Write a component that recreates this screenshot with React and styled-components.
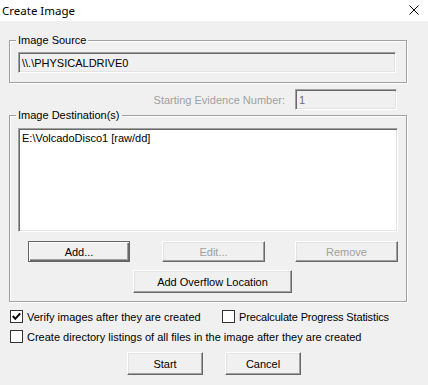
import React from "react";
import styled, { createGlobalStyle, css } from "styled-components";

const Global = createGlobalStyle`
  html, body { margin: 0; padding: 0; background: #f0f0f0; }
  body { width: 428px; height: 385px; overflow: hidden; }
  * { box-sizing: border-box; }
`;

const Window = styled.div`
  width: 428px;
  height: 385px;
  background: #f0f0f0;
  font-family: "Liberation Sans", Arial, sans-serif;
  font-size: 11px;
  color: #000;
  display: flex;
  flex-direction: column;
`;

const TitleBar = styled.div`
  height: 21px;
  background: #fff;
  display: flex;
  align-items: center;
  justify-content: space-between;
  padding: 0 9px 1px 2px;
`;

const Title = styled.span`
  font-family: "Noto Sans", "Open Sans", sans-serif;
  font-size: 11.5px;
  color: #000;
`;

const Body = styled.div`
  display: flex;
  flex-direction: column;
  padding-left: 9px;
  width: 407px;
`;

const Group = styled.div`
  position: relative;
  border: 1px solid #a0a0a0;
  box-shadow: inset 1px 1px 0 #fff, 1px 1px 0 #fff;
  margin-top: ${(p) => p.$mt}px;
  height: ${(p) => p.$h}px;
  padding: ${(p) => p.$pt}px 0 0 8px;
  display: flex;
  flex-direction: column;
`;

const Legend = styled.span`
  position: absolute;
  top: -7px;
  left: 6px;
  padding: 0 2px;
  background: #f0f0f0;
  line-height: 13px;
`;

const sunken = css`
  border-style: solid;
  border-width: 1px;
  border-color: #a0a0a0 #fff #fff #a0a0a0;
  box-shadow: inset 1px 1px 0 #696969, inset -1px -1px 0 #e3e3e3;
`;

const Field = styled.div`
  ${sunken}
  width: ${(p) => p.$w}px;
  height: 21px;
  background: #f0f0f0;
  padding: 3px 3px 0 3px;
  line-height: 14px;
  color: ${(p) => (p.$disabled ? "#6d6d6d" : "#000")};
  white-space: nowrap;
`;

const EvidenceRow = styled.div`
  display: flex;
  justify-content: flex-end;
  align-items: center;
  gap: 10px;
  margin-top: 6px;
  padding-right: 10px;
  height: 21px;
`;

const Muted = styled.span`
  color: #a0a0a0;
`;

const ListBox = styled.div`
  ${sunken}
  width: 380px;
  height: 104px;
  background: #fff;
  padding: 3px 3px;
  line-height: 13px;
`;

const ButtonRow = styled.div`
  display: flex;
  margin-top: ${(p) => p.$mt}px;
  padding-left: ${(p) => p.$pl}px;
  gap: ${(p) => p.$gap || 0}px;
`;

const Button = styled.div`
  width: ${(p) => p.$w}px;
  height: ${(p) => p.$h || 23}px;
  margin-left: ${(p) => p.$ml || 0}px;
  background: #f0f0f0;
  display: flex;
  align-items: center;
  justify-content: center;
  color: ${(p) => (p.$disabled ? "#a0a0a0" : "#000")};
  border-style: solid;
  border-width: 1px;
  border-color: ${(p) =>
    p.$default ? "#646464" : "#fff #696969 #696969 #fff"};
  box-shadow: ${(p) =>
    p.$default
      ? "inset 1px 1px 0 #fff, inset -1px -1px 0 #696969, inset -2px -2px 0 #a0a0a0"
      : "inset -1px -1px 0 #a0a0a0, inset 1px 1px 0 #e3e3e3"};
`;

const CheckRow = styled.div`
  display: flex;
  align-items: center;
  margin-top: ${(p) => p.$mt}px;
  padding-left: 1px;
  height: 13px;
`;

const CheckItem = styled.label`
  display: flex;
  align-items: center;
  gap: 4px;
  width: ${(p) => (p.$w ? `${p.$w}px` : "auto")};
  white-space: nowrap;
  letter-spacing: ${(p) => p.$ls || 0}px;
`;

const Box = styled.span`
  width: 13px;
  height: 13px;
  border: 1px solid #333;
  background: #fff;
  display: flex;
  align-items: center;
  justify-content: center;
`;

const Check = ({ checked, label, w, ls }) => (
  <CheckItem $w={w} $ls={ls}>
    <Box>
      {checked && (
        <svg width="11" height="11" viewBox="0 0 11 11">
          <path d="M1.8 5 L4.3 7.8 L9.2 2.3" stroke="#000" strokeWidth="2" fill="none" />
        </svg>
      )}
    </Box>
    <span>{label}</span>
  </CheckItem>
);

export default function App() {
  return (
    <Window>
      <Global />
      <TitleBar>
        <Title>Create Image</Title>
        <svg width="10" height="10" viewBox="0 0 10 10">
          <path d="M0.5 0.5 L9.5 9.5 M9.5 0.5 L0.5 9.5" stroke="#000" strokeWidth="1" />
        </svg>
      </TitleBar>
      <Body>
        <Group $mt={19} $h={43} $pt={11}>
          <Legend>Image Source</Legend>
          <Field $w={378}>\\.\PHYSICALDRIVE0</Field>
        </Group>
        <EvidenceRow>
          <Muted>Starting Evidence Number:</Muted>
          <Field $w={102} $disabled>1</Field>
        </EvidenceRow>
        <Group $mt={5} $h={187} $pt={12}>
          <Legend>Image Destination(s)</Legend>
          <ListBox>E:\VolcadoDisco1 [raw/dd]</ListBox>
          <ButtonRow $mt={9} $pl={10}>
            <Button $w={102} $h={21} $default>Add...</Button>
            <Button $w={103} $h={21} $ml={32} $disabled>Edit...</Button>
            <Button $w={103} $h={21} $ml={30} $disabled>Remove</Button>
          </ButtonRow>
          <ButtonRow $mt={8} $pl={115}>
            <Button $w={159}>Add Overflow Location</Button>
          </ButtonRow>
        </Group>
        <CheckRow $mt={8}>
          <Check checked w={212} label="Verify images after they are created" />
          <Check ls={-0.15} label="Precalculate Progress Statistics" />
        </CheckRow>
        <CheckRow $mt={7}>
          <Check label="Create directory listings of all files in the image after they are created" />
        </CheckRow>
        <ButtonRow $mt={9} $pl={118} $gap={22}>
          <Button $w={76}>Start</Button>
          <Button $w={76}>Cancel</Button>
        </ButtonRow>
      </Body>
    </Window>
  );
}
